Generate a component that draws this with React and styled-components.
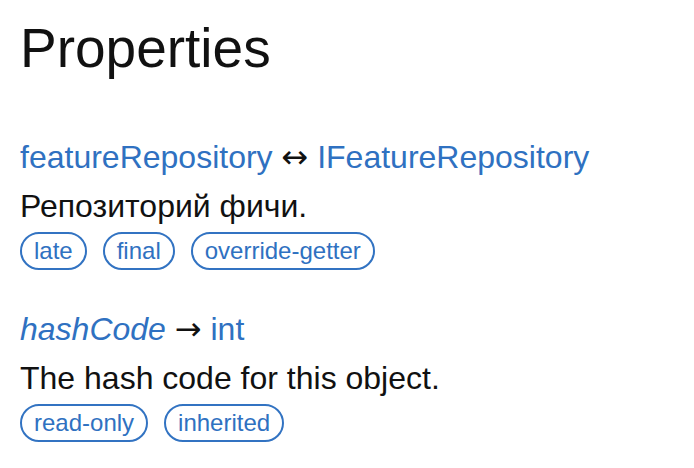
import React from 'react';
import styled, { createGlobalStyle } from 'styled-components';

const GlobalStyle = createGlobalStyle`
  html, body {
    margin: 0;
    padding: 0;
    background: #fff;
  }
  body {
    font-family: "Liberation Sans", Arial, "DejaVu Sans", sans-serif;
    color: #111;
  }
`;

const properties = [
  {
    name: 'featureRepository',
    italic: false,
    arrow: '↔',
    type: 'IFeatureRepository',
    description: 'Репозиторий фичи.',
    features: ['late', 'final', 'override-getter'],
  },
  {
    name: 'hashCode',
    italic: true,
    arrow: '→',
    type: 'int',
    description: 'The hash code for this object.',
    features: ['read-only', 'inherited'],
  },
];

const App = () => {
  return (
    <>
      <GlobalStyle />
      <Page>
        <Title>Properties</Title>
        <PropertyList>
          {properties.map((prop) => (
            <Property key={prop.name}>
              <Signature>
                <NameLink href="#" $italic={prop.italic}>
                  {prop.name}
                </NameLink>{' '}
                <Arrow>{prop.arrow}</Arrow>{' '}
                <TypeLink href="#">{prop.type}</TypeLink>
              </Signature>
              <Description>{prop.description}</Description>
              <Features>
                {prop.features.map((f) => (
                  <Feature key={f}>{f}</Feature>
                ))}
              </Features>
            </Property>
          ))}
        </PropertyList>
      </Page>
    </>
  );
};

export default App;

const Page = styled.div`
  padding: 15px 20px 0;
`;

const Title = styled.h1`
  margin: 0;
  font-size: 55px;
  line-height: 66px;
  font-weight: normal;
  color: #111;
`;

const PropertyList = styled.dl`
  margin: 56px 0 0;
  display: flex;
  flex-direction: column;
  gap: 39px;
`;

const Property = styled.div`
  display: flex;
  flex-direction: column;
`;

const Signature = styled.dt`
  font-size: 32px;
  line-height: 40px;
  white-space: nowrap;
`;

const NameLink = styled.a`
  color: #2f71c1;
  text-decoration: none;
  font-style: ${(props) => (props.$italic ? 'italic' : 'normal')};
`;

const Arrow = styled.span`
  color: #111;
  font-family: "DejaVu Sans", sans-serif;
`;

const TypeLink = styled.a`
  color: #2f71c1;
  text-decoration: none;
`;

const Description = styled.dd`
  margin: 9px 0 0;
  font-size: 32px;
  line-height: 40px;
  color: #111;
`;

const Features = styled.div`
  margin-top: 6px;
  display: flex;
  gap: 16px;
`;

const Feature = styled.span`
  display: inline-block;
  box-sizing: border-box;
  height: 38px;
  padding: 0 12px;
  border: 2px solid #3273c2;
  border-radius: 19px;
  font-size: 24px;
  line-height: 34px;
  color: #2f71c1;
`;
